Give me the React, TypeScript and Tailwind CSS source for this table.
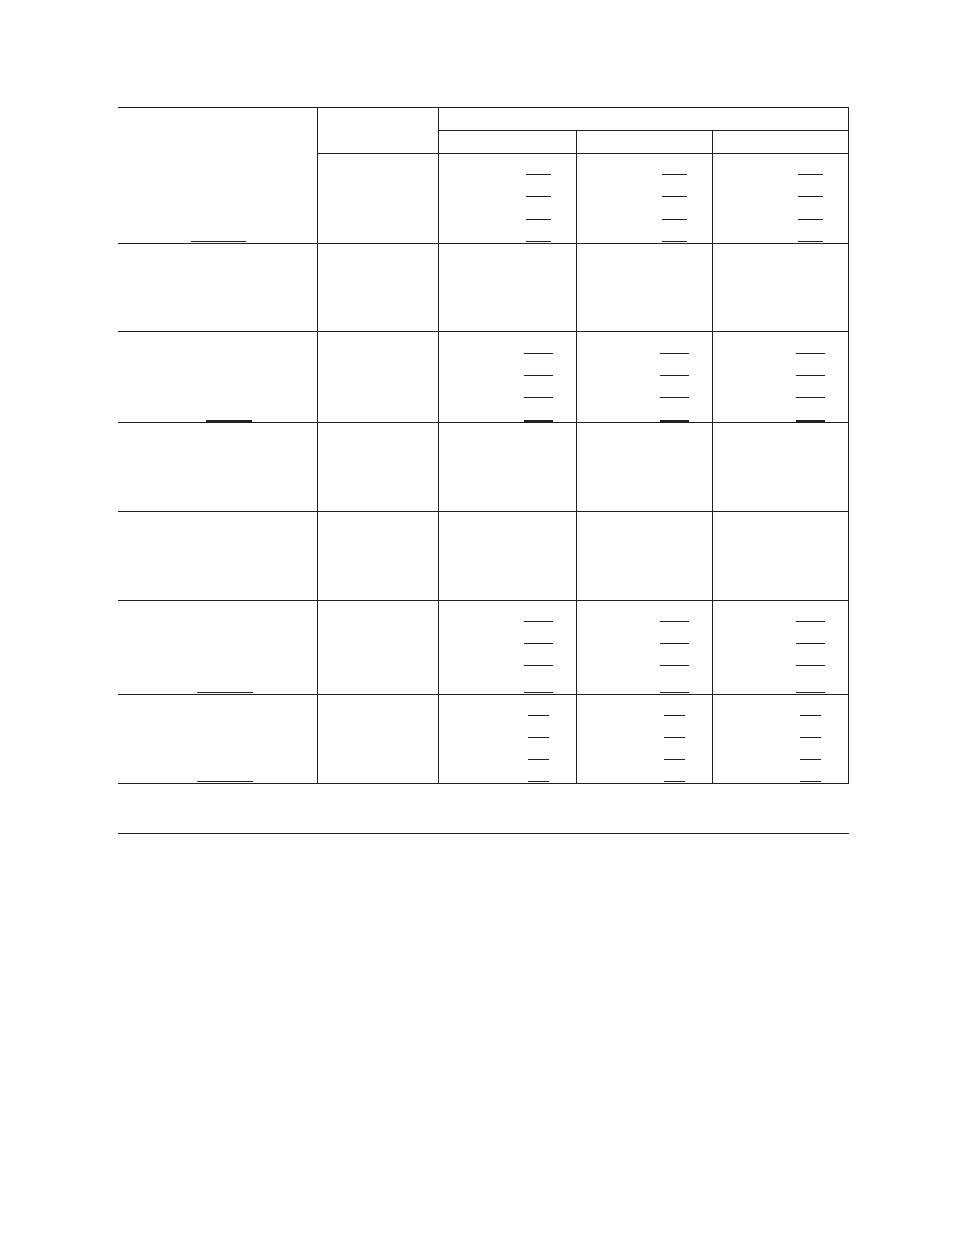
const ink = "border-[#231f20]";

type Blank = { h: string; thick?: boolean };

// stack of short rules at the right edge of a figure cell
const Blanks = ({ items, size }: { items: Blank[]; size: string }) => (
  <div className="flex flex-col items-end">
    {items.map((b, i) => (
      <div
        key={i}
        className={`${b.h} ${size} ${ink} ${b.thick ? "border-b-2" : "border-b"}`}
      />
    ))}
  </div>
);

const first: Blank[] = [{ h: "h-[21px]" }, { h: "h-[22px]" }, { h: "h-[23px]" }, { h: "h-[22px]" }];
const third: Blank[] = [{ h: "h-[22px]" }, { h: "h-[22px]" }, { h: "h-[22px]" }, { h: "h-[24px]", thick: true }];
const sixth: Blank[] = [{ h: "h-[21px]" }, { h: "h-[22px]" }, { h: "h-[22px]" }, { h: "h-[27px]" }];
const seventh: Blank[] = [{ h: "h-[21px]" }, { h: "h-[22px]" }, { h: "h-[22px]" }, { h: "h-[22px]" }];

type Row = { blanks?: Blank[]; size?: string; label?: string; last?: boolean };

const rows: Row[] = [
  { blanks: first, size: "w-[25px] mr-[25px]" },
  {},
  { blanks: third, size: "w-[29px] mr-[23px]", label: "ml-[88px] w-[46px] border-b-2" },
  {},
  {},
  { blanks: sixth, size: "w-[29px] mr-[23px]", label: "ml-[79px] w-[56px] border-b mb-[1px]" },
  { blanks: seventh, size: "w-[21px] mr-[27px]", label: "ml-[79px] w-[56px] border-b mb-[1px]", last: true },
];

export default function App() {
  return (
    <div className="min-h-screen bg-white pt-[107px] pl-[118px] font-['Liberation_Sans',sans-serif]">
      <div className="w-[731px]">
        <div className="grid grid-cols-[199px_121px_138px_136px_137px] grid-rows-[23px_23px_90px_88px_91px_89px_89px_94px_90px]">
          {/* heading block */}
          <div className={`row-span-3 border-t ${ink} flex flex-col justify-end`}>
            <div className={`ml-[73px] w-[55px] border-b mb-[1px] ${ink}`} />
          </div>
          <div className={`row-span-2 border-t border-l ${ink}`} />
          <div className={`col-span-3 border-t border-l border-r ${ink}`} />
          <div className={`border-t border-l ${ink}`} />
          <div className={`border-t border-l ${ink}`} />
          <div className={`border-t border-l border-r ${ink}`} />

          {rows.map((r, i) => (
            <div key={i} className="contents">
              {i > 0 && (
                <div className={`border-t ${ink} flex flex-col justify-end ${r.last ? "border-b" : ""}`}>
                  {r.label && <div className={`${r.label} ${ink}`} />}
                </div>
              )}
              <div className={`border-t border-l ${ink} ${r.last ? "border-b" : ""}`} />
              {[0, 1, 2].map((c) => (
                <div
                  key={c}
                  className={`border-t border-l ${ink} ${c === 2 ? "border-r" : ""} ${r.last ? "border-b" : ""}`}
                >
                  {r.blanks && <Blanks items={r.blanks} size={r.size!} />}
                </div>
              ))}
            </div>
          ))}
        </div>
        <div className={`h-[50px] border-b ${ink}`} />
      </div>
    </div>
  );
}
